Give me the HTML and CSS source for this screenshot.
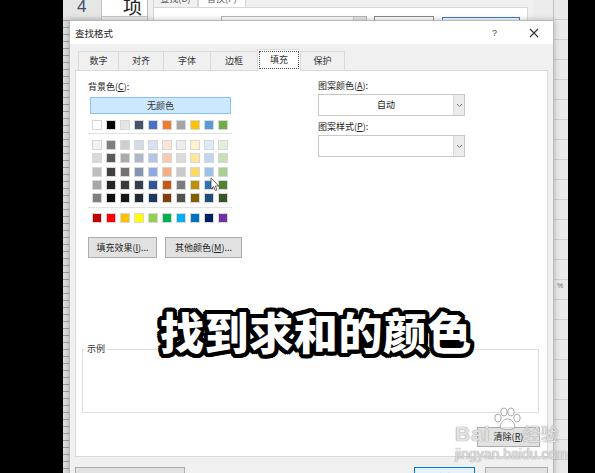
FILE: index.html
```html
<!DOCTYPE html>
<html lang="zh-CN">
<head>
<meta charset="utf-8">
<title>查找格式</title>
<link rel="stylesheet" href="styles.css">
</head>
<body>
<div class="desktop">
  <div class="sheet">
    <div class="rowheads"><div class="rh4">4</div></div>
    <div class="cells">
      <div class="cell-top"><div class="cell-x">项</div></div>
      <div class="right-strip"><span class="pct">%</span></div>
    </div>
  </div>

  <div class="back-dialog">
    <div class="back-tabs">
      <div class="back-tab">查找(D)</div>
      <div class="back-tab sel">替换(P)</div>
    </div>
    <div class="back-panel">
      <div class="back-input"><span class="back-drop"></span></div>
      <div class="back-btn"></div>
      <div class="back-btn blue"></div>
    </div>
  </div>

  <div class="dialog">
    <div class="titlebar">
      <span class="title">查找格式</span>
      <span class="help">?</span>
      <svg class="close" width="10" height="10" viewBox="0 0 10 10"><path d="M1 1L9 9M9 1L1 9" stroke="#333" stroke-width="1.1"/></svg>
    </div>
    <div class="dbody">
      <div class="tabs">
        <div class="tab t1">数字</div>
        <div class="tab t2">对齐</div>
        <div class="tab t3">字体</div>
        <div class="tab t4">边框</div>
        <div class="tab t5 sel"><span class="focus">填充</span></div>
        <div class="tab t6">保护</div>
      </div>
      <div class="panel">
        <div class="cols">
          <div class="leftcol">
            <div class="lbl">背景色(<u>C</u>):</div>
            <div class="nocolor">无颜色</div>
            <div class="row theme">
              <i style="background:#ffffff"></i><i style="background:#000000"></i><i style="background:#e7e6e6"></i><i style="background:#44546a"></i><i style="background:#4472c4"></i><i style="background:#ed7d31"></i><i style="background:#a5a5a5"></i><i style="background:#ffc000"></i><i style="background:#5b9bd5"></i><i style="background:#70ad47"></i>
            </div>
            <div class="sep"></div>
            <div class="tints">
              <i style="background:#f2f2f2"></i><i style="background:#7f7f7f"></i><i style="background:#d0cece"></i><i style="background:#d6dce4"></i><i style="background:#d9e1f2"></i><i style="background:#fce4d6"></i><i style="background:#ededed"></i><i style="background:#fff2cc"></i><i style="background:#ddebf7"></i><i style="background:#e2efda"></i>
              <i style="background:#d9d9d9"></i><i style="background:#595959"></i><i style="background:#aeaaaa"></i><i style="background:#adb9ca"></i><i style="background:#b4c6e7"></i><i style="background:#f8cbad"></i><i style="background:#dbdbdb"></i><i style="background:#ffe699"></i><i style="background:#bdd7ee"></i><i style="background:#c6e0b4"></i>
              <i style="background:#bfbfbf"></i><i style="background:#404040"></i><i style="background:#757171"></i><i style="background:#8497b0"></i><i style="background:#8ea9db"></i><i style="background:#f4b084"></i><i style="background:#c9c9c9"></i><i style="background:#ffd966"></i><i style="background:#9bc2e6"></i><i style="background:#a9d08e"></i>
              <i style="background:#a6a6a6"></i><i style="background:#262626"></i><i style="background:#3a3838"></i><i style="background:#333f4f"></i><i style="background:#305496"></i><i style="background:#c65911"></i><i style="background:#7b7b7b"></i><i style="background:#bf8f00"></i><i style="background:#2f75b5"></i><i style="background:#548235"></i>
              <i style="background:#808080"></i><i style="background:#0d0d0d"></i><i style="background:#171616"></i><i style="background:#222a35"></i><i style="background:#203764"></i><i style="background:#833c0c"></i><i style="background:#525252"></i><i style="background:#806000"></i><i style="background:#1f4e78"></i><i style="background:#375623"></i>
            </div>
            <div class="sep sep2"></div>
            <div class="row std">
              <i style="background:#c00000"></i><i style="background:#ff0000"></i><i style="background:#ffc000"></i><i style="background:#ffff00"></i><i style="background:#92d050"></i><i style="background:#00b050"></i><i style="background:#00b0f0"></i><i style="background:#0070c0"></i><i style="background:#002060"></i><i style="background:#7030a0"></i>
            </div>
            <div class="btnrow">
              <div class="btn b-fill">填充效果(<u>I</u>)...</div>
              <div class="btn b-more">其他颜色(<u>M</u>)...</div>
            </div>
          </div>
          <div class="rightcol">
            <div class="lbl">图案颜色(<u>A</u>):</div>
            <div class="combo"><span class="cval">自动</span><span class="carrow"><svg width="7" height="5" viewBox="0 0 7 5"><path d="M1 1L3.5 3.5L6 1" fill="none" stroke="#777" stroke-width="1"/></svg></span></div>
            <div class="lbl lbl2">图案样式(<u>P</u>):</div>
            <div class="combo"><span class="cval"></span><span class="carrow"><svg width="7" height="5" viewBox="0 0 7 5"><path d="M1 1L3.5 3.5L6 1" fill="none" stroke="#777" stroke-width="1"/></svg></span></div>
          </div>
        </div>
        <fieldset class="sample"><legend>示例</legend><div class="sample-in"></div></fieldset>
        <div class="clearrow"><div class="btn b-clear">清除(<u>R</u>)</div></div>
      </div>
      <div class="footer">
        <div class="btn b-pick">从单元格选择格式(<u>A</u>)...</div>
        <div class="spacer"></div>
        <div class="btn b-ok">确定</div>
        <div class="btn b-cancel">取消</div>
      </div>
    </div>
  </div>

  <svg class="cursor" width="10" height="15" viewBox="0 0 10 15"><path d="M1 1L1 12L3.6 9.6L5.4 13.6L7 12.9L5.3 9L8.8 9Z" fill="#fff" stroke="#444" stroke-width="0.8"/></svg>

  <div class="caption">找到求和的颜色</div>

  <div class="watermark">
    <svg class="paw" width="30" height="24" viewBox="0 0 30 24"><g fill="rgba(255,255,255,0.55)" stroke="#aaa" stroke-width="1"><ellipse cx="6" cy="11" rx="3.2" ry="4"/><ellipse cx="12" cy="5" rx="3.2" ry="4"/><ellipse cx="19" cy="5" rx="3.2" ry="4"/><ellipse cx="25" cy="11" rx="3.2" ry="4"/><path d="M8 21C8 15 12 12 15.5 12C19 12 23 15 23 21C20 23 11 23 8 21Z"/></g></svg>
    <div class="wm-line"><span class="wm-bai">Bai</span><span class="wm-jy">经验</span></div>
    <div class="wm-url">jingyan.baidu.com</div>
  </div>
</div>
</body>
</html>
```
FILE: styles.css
```css
* { box-sizing: border-box; }
html, body { margin: 0; padding: 0; }
body {
  background: #000;
  width: 595px;
  height: 473px;
  overflow: hidden;
  font-family: "Noto Sans CJK SC", "Microsoft YaHei", sans-serif;
  color: #1a1a1a;
}
u { text-decoration: underline; text-underline-offset: 1px; }
.desktop { position: relative; width: 595px; height: 473px; overflow: hidden; background: #000; }

/* spreadsheet behind */
.sheet {
  position: absolute; left: 63px; top: 0; width: 505px; height: 473px;
  display: flex; background: #ececec;
}
.rowheads {
  width: 39px; height: 100%;
  background: #dedede repeating-linear-gradient(to bottom, transparent 0 6px, #9c9c9c 6px 7px);
  border-right: 1px solid #c4c4c4;
}
.rh4 {
  height: 17px; background: #e6e6e6; color: #3f4e6e;
  font-family: "Liberation Sans", sans-serif; font-size: 17px; line-height: 13px;
  padding-left: 14px; overflow: hidden;
}
.cells { flex: 1; display: flex; flex-direction: column; position: relative; }
.cell-top { height: 17px; display: flex; }
.cell-x {
  width: 45px; height: 17px; background: #fff; border-bottom: 1px solid #c8c8c8;
  font-size: 19px; line-height: 12px; padding-left: 21px; overflow: hidden; color: #222;
}
.right-strip {
  position: absolute; right: 0; top: 0; width: 15px; height: 100%;
  background: #e9e9e9 repeating-linear-gradient(to bottom, transparent 0 19px, #cfcfcf 19px 20px);
  border-left: 1px solid #bdbdbd;
}
.pct { position: absolute; left: 3px; top: 282px; font-size: 7px; color: #666; font-family: "Liberation Sans", sans-serif; }

/* back dialog */
.back-dialog {
  position: absolute; left: 147px; top: -8px; width: 386px; height: 40px;
  background: #f0f0f0; border-left: 1px solid #bbb; padding-left: 5px;
}
.back-tabs { display: flex; height: 15px; }
.back-tab {
  width: 45px; height: 15px; font-size: 9px; line-height: 12px; text-align: center; color: #555;
  border: 1px solid #d6d6d6; border-bottom: none; background: #f0f0f0;
}
.back-tab.sel { background: #fff; width: 48px; }
.back-panel {
  width: 375px; height: 30px; background: #fff; border: 1px solid #d6d6d6;
  display: flex; align-items: flex-start; padding-top: 8px; padding-left: 67px;
}
.back-input { width: 146px; height: 14px; border: 1px solid #b5b5b5; position: relative; }
.back-drop { position: absolute; right: 0; top: 0; width: 13px; height: 100%; background: #e6e6e6; border-left: 1px solid #ccc; }
.back-btn { width: 60px; height: 14px; border: 1px solid #8a8a8a; margin-left: 7px; background: #fff; }
.back-btn.blue { width: 78px; margin-left: 8px; border: 1px solid #3c7fd0; margin-top: 1px; background: #f6f6f6; }

/* main dialog */
.dialog {
  position: absolute; left: 69px; top: 20px; width: 485px; height: 470px;
  background: #f0f0f0; border: 1px solid #b9b9b9;
  box-shadow: 0 0 6px rgba(0,0,0,0.25);
  display: flex; flex-direction: column;
}
.titlebar {
  height: 23px; background: #fff; display: flex; align-items: center;
  padding-left: 5px;
}
.title { font-size: 9.5px; color: #222; flex: 1; }
.help { font-size: 9px; color: #444; width: 10px; margin-right: 27px; font-family: "Liberation Sans", sans-serif; }
.close { margin-right: 14px; }
.dbody { flex: 1; padding: 7px 5px 0 5px; display: flex; flex-direction: column; }

.tabs { display: flex; height: 19px; margin-left: 3px; align-items: flex-end; }
.tab {
  height: 19px; font-size: 9px; line-height: 18px; text-align: center; color: #333;
  border: 1px solid #dadada; border-bottom: none; border-right: none; background: #f0f0f0;
}
.t1 { width: 40px; } .t2 { width: 45px; } .t3 { width: 47px; } .t4 { width: 47px; }
.t5 { width: 43px; } .t6 { width: 45px; border-right: 1px solid #dadada; }
.tab.sel {
  height: 22px; background: #fff; margin-bottom: -1px; position: relative; z-index: 1;
  padding: 1px 1px 0 1px;
}
.focus { display: block; height: 18px; border: 1px dotted #555; line-height: 16px; }

.panel {
  width: 473px; height: 387px; background: #fff; border: 1px solid #d9d9d9;
  display: flex; flex-direction: column;
}
.cols { display: flex; margin: 10px 0 0 12px; }
.leftcol { width: 145px; flex: none; display: flex; flex-direction: column; }
.rightcol { width: 147px; flex: none; margin-left: 85px; display: flex; flex-direction: column; margin-top: -1px; }
.lbl { font-size: 9px; line-height: 12px; height: 12px; color: #222; white-space: nowrap; }
.nocolor {
  margin: 4px 0 0 2px; width: 141px; height: 17px;
  background: #cce8ff; border: 1px solid #8cc0ee;
  font-size: 9px; line-height: 15px; text-align: center; color: #333;
}
.row { display: flex; gap: 4px; margin-left: 4px; }
.row.theme { margin-top: 6px; }
i { display: block; flex: none; width: 10px; height: 10px; border: 1px solid #d7d7d7; }
.sep { height: 1px; background: #e3e3e3; width: 144px; margin-top: 3px; }
.sep2 { margin-top: 4px; }
.tints {
  display: grid; grid-template-columns: repeat(10, 10px); column-gap: 4px; row-gap: 3.3px;
  margin: 6px 0 0 4px;
}
.row.std { margin-top: 5px; }
.btnrow { display: flex; gap: 8px; margin-top: 14px; width: 160px; }
.btn {
  flex: none;
  height: 21px; background: #e1e1e1; border: 1px solid #adadad;
  font-size: 9px; line-height: 19px; text-align: center; color: #222; white-space: nowrap;
}
.b-fill { width: 69px; }
.b-more { width: 77px; }

.combo { margin-top: 2px; height: 22px; width: 147px; border: 1px solid #c7c7c7; display: flex; background: #fff; }
.cval { flex: 1; font-size: 9px; line-height: 20px; text-align: center; color: #222; }
.carrow { width: 11px; background: #ececec; border-left: 1px solid #dcdcdc; display: flex; align-items: center; justify-content: center; }
.lbl2 { margin-top: 5px; }

.sample {
  margin: 85px 0 0 6px; padding: 0; width: 457px;
  border: 1px solid #dedede;
}
.sample legend { font-size: 9px; line-height: 12px; padding: 0 2px; margin-left: 2px; color: #333; }
.sample-in { height: 57px; }
.clearrow { display: flex; justify-content: flex-end; margin: 14px 7px 0 0; }
.b-clear { width: 63px; height: 20px; line-height: 18px; }

.footer { display: flex; margin-top: 10px; }
.b-pick { width: 110px; }
.spacer { flex: 1; }
.b-ok { width: 61px; border: 1px solid #0078d7; background: #e5f1fb; }
.b-cancel { width: 63px; margin-left: 10px; }

.cursor { position: absolute; left: 210px; top: 177px; }

.caption {
  position: absolute; left: 160px; top: 309px;
  font-size: 44px; line-height: 44px; font-weight: 900; color: #fff; white-space: nowrap;
  letter-spacing: 0.6px;
  text-shadow:
    4px 0 0 #000, -4px 0 0 #000, 0 4px 0 #000, 0 -4px 0 #000,
    3px 3px 0 #000, -3px 3px 0 #000, 3px -3px 0 #000, -3px -3px 0 #000,
    4px 2px 0 #000, -4px 2px 0 #000, 4px -2px 0 #000, -4px -2px 0 #000,
    2px 4px 0 #000, -2px 4px 0 #000, 2px -4px 0 #000, -2px -4px 0 #000,
    0 0 2px #000;
}

.watermark { position: absolute; left: 455px; top: 407px; width: 112px; height: 55px; }
.paw { position: absolute; left: 37px; top: 0; }
.wm-line { position: absolute; left: 0; top: 13px; display: flex; align-items: baseline; white-space: nowrap; }
.wm-bai, .wm-jy {
  font-family: "Liberation Sans", sans-serif; font-weight: 700;
  color: rgba(255,255,255,0.72);
  text-shadow: 0 0 1px #999, 0 0 1px #999;
}
.wm-bai { font-size: 21px; letter-spacing: 1px; }
.wm-jy { font-family: "Noto Sans CJK SC", sans-serif; font-size: 18px; margin-left: 32px; font-weight: 400; }
.wm-url {
  position: absolute; left: 0; top: 39px; font-family: "Liberation Sans", sans-serif;
  font-size: 14px; color: rgba(255,255,255,0.7); text-shadow: 0 0 1px #999, 0 0 1px #999; white-space: nowrap;
}
```
